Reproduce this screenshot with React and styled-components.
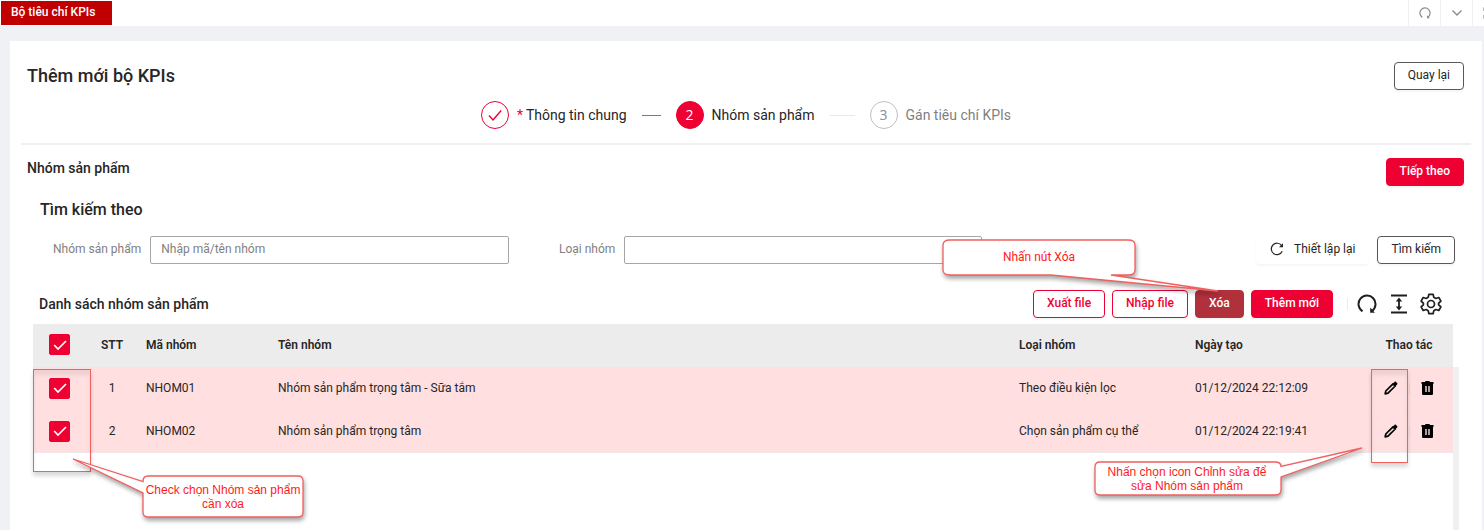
import React from "react";
import styled, { createGlobalStyle, css } from "styled-components";

const RED = "#ee0033";
const INK = "#262626";

const GlobalStyle = createGlobalStyle`
  *, *::before, *::after { box-sizing: border-box; }
  body {
    margin: 0;
    background: #f0f1f5;
    color: ${INK};
    font: 12px/20px Roboto, "Liberation Sans", sans-serif;
  }
  button, input, select { font: inherit; color: inherit; }
  h1, h2, h3, p { margin: 0; }
  svg { display: block; flex: none; }
`;

const Page = styled.div`
  display: flex;
  flex-direction: column;
  min-height: 100vh;
  overflow: hidden;
`;

const TabBar = styled.header`
  display: flex;
  justify-content: space-between;
  height: 26px;
  background: #fff;
  overflow: hidden;
`;

const Tab = styled.a`
  margin: 1px;
  padding: 0 17px 0 10px;
  background: #c00000;
  color: #fff;
  font-size: 12px;
  font-weight: 500;
  line-height: 23px;
  text-decoration: none;
`;

const TabTools = styled.div`
  display: flex;
  margin-right: -20px;
`;

const TabTool = styled.button`
  display: grid;
  place-items: center;
  width: 32px;
  padding: 0;
  border: 0;
  border-left: 1px solid #f0f0f0;
  background: none;
  color: #8c8c8c;
`;

const Card = styled.main`
  position: relative;
  flex: 1;
  display: flex;
  flex-direction: column;
  margin: 15px 2px 0 10px;
  background: #fff;
`;

const TitleRow = styled.div`
  display: flex;
  justify-content: space-between;
  align-items: center;
  padding: 21px 18px 0 17px;
`;

const Title = styled.h1`
  font-size: 18px;
  font-weight: 500;
  line-height: 28px;
`;

const Heading = styled.h2`
  font-size: ${(p) => (p.$large ? 16 : 14)}px;
  font-weight: 500;
  line-height: 20px;
`;

const variants = {
  plain: css`border-color: #595959; background: #fff;`,
  outline: css`border-color: ${RED}; background: #fff; color: ${RED}; font-weight: 500;`,
  primary: css`border-color: ${RED}; background: ${RED}; color: #fff; font-weight: 500;`,
  danger: css`border-color: #b0303c; background: #b0303c; color: #fff; font-weight: 500;`,
  text: css`border-color: transparent; background: none;`,
};

const Button = styled.button`
  display: inline-flex;
  align-items: center;
  justify-content: center;
  gap: 10px;
  height: 28px;
  padding: 0 13px 2px;
  border: 1px solid;
  border-radius: 4px;
  box-shadow: 0 2px 2px rgba(0, 0, 0, 0.04);
  white-space: nowrap;
  ${(p) => variants[p.$variant]}
`;

const Steps = styled.ol`
  display: flex;
  justify-content: center;
  align-items: center;
  gap: 15px;
  margin: 0 11px;
  padding: 11px 0 14px;
  border-bottom: 2px solid #f0f0f0;
  list-style: none;
`;

const Step = styled.li`
  display: flex;
  align-items: center;
  gap: 8px;
  color: ${(p) => (p.$state === "wait" ? "#7f7f7f" : INK)};
  font-size: 14px;
`;

const StepMark = styled.span`
  display: grid;
  place-items: center;
  width: 28px;
  height: 28px;
  border: 1px solid ${(p) => (p.$state === "wait" ? "#bfbfbf" : RED)};
  border-radius: 50%;
  background: ${(p) => (p.$state === "active" ? RED : "#fff")};
  color: ${(p) => (p.$state === "active" ? "#fff" : p.$state === "done" ? RED : "#8c8c8c")};
  font-family: "Open Sans", sans-serif;
`;

const StepLine = styled.li`
  width: ${(p) => (p.$done ? 19 : 25)}px;
  height: 1px;
  background: ${(p) => (p.$done ? "#3f88cf" : "#e8e8e8")};
`;

const Required = styled.span`
  color: ${RED};
  margin-right: 3px;
`;

const SectionRow = styled.div`
  display: flex;
  justify-content: space-between;
  align-items: flex-start;
  padding: 13px 18px 0 17px;
`;

const SearchPanel = styled.section`
  padding: 14px 27px 0 30px;
`;

const SearchForm = styled.form`
  display: flex;
  align-items: center;
  gap: 50px;
  padding: 16px 0 0 13px;
`;

const Field = styled.div`
  flex: 0 1 ${(p) => p.$basis}px;
  display: flex;
  align-items: center;
  gap: 9px;
`;

const Label = styled.label`
  flex: none;
  padding-bottom: 2px;
  color: #7f7f7f;
`;

const control = css`
  flex: 1;
  min-width: 0;
  height: 28px;
  padding: 0 10px 2px;
  border: 1px solid #a6a6a6;
  border-radius: 2px;
  background: #fff;
  appearance: none;
`;

const Input = styled.input`
  ${control}
  &::placeholder { color: #7f7f7f; opacity: 1; }
`;

const Select = styled.select`
  ${control}
`;

const FormActions = styled.div`
  display: flex;
  gap: 8px;
  margin-left: auto;
`;

const ListHeader = styled.div`
  display: flex;
  justify-content: space-between;
  align-items: center;
  padding: 26px 39px 6px 29px;
`;

const Toolbar = styled.div`
  display: flex;
  align-items: center;
  gap: 7px;
`;

const Separator = styled.span`
  width: 1px;
  height: ${(p) => p.$size}px;
  margin-left: ${(p) => (p.$size > 11 ? 7 : 0)}px;
  background: ${(p) => (p.$size > 11 ? "#ececec" : "#efd6d7")};
`;

const IconButton = styled.button`
  display: grid;
  place-items: center;
  width: ${(p) => p.$width}px;
  height: 24px;
  padding: 0;
  border: 0;
  background: none;
  color: ${(p) => p.$color || "#1f1f1f"};
`;

const IconGroup = styled.div`
  display: flex;
  gap: 8px;
`;

const TableArea = styled.div`
  flex: 1;
  display: flex;
  align-items: stretch;
  padding: 0 23px 0 23px;
`;

const TableBox = styled.div`
  flex: 1;
`;

const ScrollTrack = styled.div`
  width: 6px;
  margin-top: 43px;
  background: #f0f0f0;
`;

const Table = styled.table`
  width: 100%;
  table-layout: fixed;
  border-collapse: separate;
  border-spacing: 0;
`;

const Col = styled.col`
  width: ${(p) => (p.$width ? `${p.$width}px` : "auto")};
`;

const cell = css`
  height: 43px;
  padding: 0 8px;
  text-align: ${(p) => (p.$center ? "center" : "left")};
  vertical-align: middle;
  white-space: nowrap;
`;

const Th = styled.th`
  ${cell}
  padding-bottom: 2px;
  background: #ececec;
  font-weight: 600;
`;

const Td = styled.td`
  ${cell}
  background: #ffdfe0;
  border-bottom: 1px solid #f0e8e8;
`;

const CheckWrap = styled.span`
  display: grid;
  place-items: center;
  > * { grid-area: 1 / 1; }
  > svg { pointer-events: none; }
`;

const CheckInput = styled.input`
  width: 21px;
  height: 21px;
  margin: 0;
  border: 1px solid ${RED};
  border-radius: 2px;
  background: ${RED};
  appearance: none;
`;

const RowActions = styled.div`
  display: flex;
  align-items: center;
  justify-content: center;
  gap: 10px;
`;

const Marker = styled.div`
  position: absolute;
  top: 328px;
  ${(p) => p.$place}
  border: 1px solid #f0605f;
  box-shadow: 0 4px 4px rgba(0, 0, 0, 0.15), inset 0 5px 4px rgba(0, 0, 0, 0.07);
  pointer-events: none;
`;

const Callout = styled.aside`
  position: absolute;
  ${(p) => p.$place}
  pointer-events: none;
  > svg {
    overflow: visible;
    filter: drop-shadow(1px 3px 2px rgba(0, 0, 0, 0.35));
  }
`;

const CalloutText = styled.p`
  position: absolute;
  ${(p) => p.$place}
  display: grid;
  place-content: center;
  color: #ff1a1a;
  font-family: ${(p) => (p.$roboto ? "Roboto" : '"Liberation Sans"')}, sans-serif;
  font-size: 12px;
  line-height: 14px;
  text-align: center;
`;

const CheckIcon = ({ size = 14, width = 1.6 }) => (
  <svg width={size} height={size} viewBox="0 0 14 14" fill="none" stroke="currentColor" strokeWidth={width}>
    <path d="M1 7.500 5 12 13.200 2.500" />
  </svg>
);

const ReloadIcon = ({ size, width }) => (
  <svg width={size} height={size} viewBox="0 0 20 20" fill="none" stroke="currentColor" strokeWidth={width}>
    <path d="M5.5 17.3A8.5 8.5 0 1 1 15 17" />
    <path d="M13.2 13.600v5.200h4.700z" fill="currentColor" stroke="none" />
  </svg>
);

const ResetIcon = () => (
  <svg width="14" height="14" viewBox="0 0 14 14" fill="none" stroke="currentColor" strokeWidth="1.2">
    <path d="M12.2 9.2A5.7 5.7 0 1 1 11.6 3.6" />
    <path d="M13 1.2v4H9z" fill="currentColor" stroke="none" />
  </svg>
);

const ChevronIcon = () => (
  <svg width="12" height="12" viewBox="0 0 12 12" fill="none" stroke="currentColor" strokeWidth="1.4">
    <path d="M1.5 3.5 6 8l4.5-4.5" />
  </svg>
);

const ExpandIcon = () => (
  <svg width="12" height="12" viewBox="0 0 12 12" fill="none" stroke="currentColor" strokeWidth="1.2">
    <path d="M1 4V1h3M8 1h3v3M11 8v3H8M4 11H1V8M1 1l3.500 3.500M11 1 7.500 4.500M11 11 7.500 7.500M1 11l3.500-3.500" />
  </svg>
);

const HeightIcon = () => (
  <svg width="18" height="20" viewBox="0 0 18 20" fill="none" stroke="currentColor" strokeWidth="1.8">
    <path d="M1 1.500h16M1 18.500h16M9 5v10" />
    <path d="M9 3.600 5.800 7.400h6.400zM9 16.400l-3.200-3.800h6.400z" fill="currentColor" stroke="none" />
  </svg>
);

const GearIcon = () => (
  <svg width="22" height="22" viewBox="0 0 22 22" fill="none" stroke="currentColor" strokeWidth="1.700" strokeLinejoin="round">
    <path d="M8.900 1.300h4.200l.7 3 2 1.150 3-.95 2.100 3.650-2.300 2.100v1.500l2.300 2.100-2.100 3.650-3-.95-2 1.150-.7 3H8.900l-.7-3-2-1.150-3 .95-2.100-3.650 2.300-2.100v-1.500l-2.300-2.100L3.200 4.500l3 .95 2-1.150z" />
    <circle cx="11" cy="11" r="3.500" />
  </svg>
);

const PencilIcon = () => (
  <svg width="14" height="14" viewBox="0 0 14 14" fill="none" stroke="currentColor" strokeWidth="1.700" strokeLinejoin="round">
    <path d="M1.200 12.800 1.800 10 9 2.800l2.200 2.200L4 12.200z" />
    <path d="M8.600 2.800 10.500.9c.5-.5 1-.5 1.500 0l1.100 1.100c.5.5.5 1 0 1.500l-1.900 1.900z" fill="currentColor" stroke="none" />
  </svg>
);

const TrashIcon = () => (
  <svg width="13" height="14" viewBox="0 0 13 14" fill="currentColor">
    <path d="M.5 1H4l.6-1h3.800L9 1h3.500v2H.5z" />
    <path fillRule="evenodd" d="M1 3h11v9.500c0 1-.5 1.500-1.500 1.500h-8C1.500 14 1 13.500 1 12.500zM4.300 5v6h1.400V5zM7.300 5v6h1.400V5z" />
  </svg>
);

const Checkbox = ({ label }) => (
  <CheckWrap>
    <CheckInput type="checkbox" defaultChecked aria-label={label} />
    <svg width="14" height="14" viewBox="0 0 14 14" fill="none" stroke="#fff" strokeWidth="1.700">
      <path d="M1.200 7 5 11 13 3" />
    </svg>
  </CheckWrap>
);

const Bubble = ({ width, height, path }) => (
  <svg width={width} height={height} viewBox={`0 0 ${width} ${height}`} fill="#fff" stroke="#f0605f" strokeWidth="1.300">
    <path d={path} />
  </svg>
);

const rows = [
  { id: 1, code: "NHOM01", name: "Nhóm sản phẩm trọng tâm - Sữa tắm", type: "Theo điều kiện lọc", date: "01/12/2024 22:12:09" },
  { id: 2, code: "NHOM02", name: "Nhóm sản phẩm trọng tâm", type: "Chọn sản phẩm cụ thể", date: "01/12/2024 22:19:41" },
];

export default function App() {
  return (
    <Page>
      <GlobalStyle />
      <TabBar>
        <Tab href="#kpis">Bộ tiêu chí KPIs</Tab>
        <TabTools>
          <TabTool aria-label="Tải lại"><ReloadIcon size={12} width={2} /></TabTool>
          <TabTool aria-label="Mở danh sách"><ChevronIcon /></TabTool>
          <TabTool aria-label="Toàn màn hình"><ExpandIcon /></TabTool>
        </TabTools>
      </TabBar>

      <Card>
        <TitleRow>
          <Title>Thêm mới bộ KPIs</Title>
          <Button $variant="plain">Quay lại</Button>
        </TitleRow>

        <Steps>
          <Step $state="done">
            <StepMark $state="done"><CheckIcon width={1.400} /></StepMark>
            <span><Required>*</Required>Thông tin chung</span>
          </Step>
          <StepLine $done aria-hidden="true" />
          <Step $state="active">
            <StepMark $state="active">2</StepMark>
            <span>Nhóm sản phẩm</span>
          </Step>
          <StepLine aria-hidden="true" />
          <Step $state="wait">
            <StepMark $state="wait">3</StepMark>
            <span>Gán tiêu chí KPIs</span>
          </Step>
        </Steps>

        <SectionRow>
          <Heading>Nhóm sản phẩm</Heading>
          <Button $variant="primary">Tiếp theo</Button>
        </SectionRow>

        <SearchPanel>
          <Heading $large>Tìm kiếm theo</Heading>
          <SearchForm>
            <Field $basis={456}>
              <Label htmlFor="group">Nhóm sản phẩm</Label>
              <Input id="group" placeholder="Nhập mã/tên nhóm" />
            </Field>
            <Field $basis={423}>
              <Label htmlFor="type">Loại nhóm</Label>
              <Select id="type" defaultValue=""><option value="" /></Select>
            </Field>
            <FormActions>
              <Button type="reset" $variant="text"><ResetIcon />Thiết lập lại</Button>
              <Button type="button" $variant="plain">Tìm kiếm</Button>
            </FormActions>
          </SearchForm>
        </SearchPanel>

        <ListHeader>
          <Heading>Danh sách nhóm sản phẩm</Heading>
          <Toolbar>
            <Button $variant="outline">Xuất file</Button>
            <Button $variant="outline">Nhập file</Button>
            <Button $variant="danger">Xóa</Button>
            <Button $variant="primary">Thêm mới</Button>
            <Separator $size={12} />
            <IconGroup>
              <IconButton $width={24} aria-label="Tải lại"><ReloadIcon size={20} width={2} /></IconButton>
              <IconButton $width={24} aria-label="Chiều cao dòng"><HeightIcon /></IconButton>
              <IconButton $width={24} aria-label="Cài đặt"><GearIcon /></IconButton>
            </IconGroup>
          </Toolbar>
        </ListHeader>

        <TableArea>
          <TableBox>
            <Table>
              <colgroup>
                <Col $width={53} /><Col $width={52} /><Col $width={132} /><Col />
                <Col $width={176} /><Col $width={178} /><Col $width={88} />
              </colgroup>
              <thead>
                <tr>
                  <Th $center><Checkbox label="Chọn tất cả" /></Th>
                  <Th $center>STT</Th>
                  <Th>Mã nhóm</Th>
                  <Th>Tên nhóm</Th>
                  <Th>Loại nhóm</Th>
                  <Th>Ngày tạo</Th>
                  <Th $center>Thao tác</Th>
                </tr>
              </thead>
              <tbody>
                {rows.map((r) => (
                  <tr key={r.id}>
                    <Td $center><Checkbox label={`Chọn ${r.code}`} /></Td>
                    <Td $center>{r.id}</Td>
                    <Td>{r.code}</Td>
                    <Td>{r.name}</Td>
                    <Td>{r.type}</Td>
                    <Td>{r.date}</Td>
                    <Td>
                      <RowActions>
                        <IconButton $width={16} $color="#000" aria-label={`Sửa ${r.code}`}><PencilIcon /></IconButton>
                        <Separator $size={11} />
                        <IconButton $width={16} $color="#000" aria-label={`Xóa ${r.code}`}><TrashIcon /></IconButton>
                      </RowActions>
                    </Td>
                  </tr>
                ))}
              </tbody>
            </Table>
          </TableBox>
          <ScrollTrack />
        </TableArea>

        <Marker $place="left: 23px; width: 58px; height: 103px;" />
        <Marker $place="right: 74px; width: 37px; height: 94px;" />

        <Callout $place="right: 264px; top: 198px;">
          <Bubble width={276} height={52} path="M8 1H186Q193 1 193 6V31Q193 36 186 36H169L276 52 109 36H8Q1 36 1 31V6Q1 1 8 1Z" />
          <CalloutText $roboto $place="left: 0; top: 0; width: 194px; height: 36px;">Nhấn nút Xóa</CalloutText>
        </Callout>

        <Callout $place="left: 63px; top: 417px;">
          <Bubble width={230} height={60} path="M75 18H225Q230 18 230 23V54Q230 59 225 59H75Q70 59 70 54V35L0 1 70 23.500Q70 18 75 18Z" />
          <CalloutText $place="left: 70px; top: 18px; width: 160px; height: 42px;">
            Check chọn Nhóm sản phẩm<br />cần xóa
          </CalloutText>
        </Callout>

        <Callout $place="right: 120px; top: 406px;">
          <Bubble width={268} height={49} path="M6 15H181Q187 15 187 19.500L268 1 187 30V43Q187 48 181 48H6Q1 48 1 43V20Q1 15 6 15Z" />
          <CalloutText $place="left: 0; top: 15px; width: 186px; height: 34px;">
            Nhấn chọn icon Chỉnh sửa để<br />sửa Nhóm sản phẩm
          </CalloutText>
        </Callout>
      </Card>
    </Page>
  );
}
